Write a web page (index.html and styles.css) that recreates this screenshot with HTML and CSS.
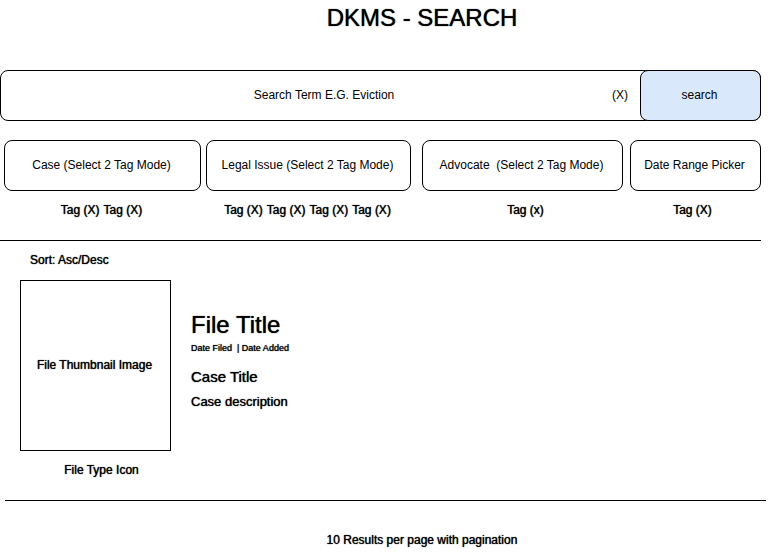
FILE: index.html
```html
<!DOCTYPE html>
<html lang="en">
<head>
  <meta charset="utf-8">
  <meta name="viewport" content="width=device-width, initial-scale=1">
  <title>DKMS - SEARCH</title>
  <link rel="stylesheet" href="styles.css">
</head>
<body>
  <header class="page-header">
    <h1 class="title strong">DKMS - SEARCH</h1>
  </header>
  <main>
    <form class="search-bar" role="search">
      <input class="search-input" type="text" aria-label="Search term" value="Search Term E.G. Eviction">
      <button class="clear" type="reset">(X)</button>
      <button class="submit" type="button">search</button>
    </form>

    <section class="filters" aria-label="Filters">
      <div class="filter">
        <select class="box" aria-label="Case"><option>Case (Select 2 Tag Mode)</option></select>
        <ul class="tags strong">
          <li>Tag <button type="button">(X)</button></li>
          <li>Tag <button type="button">(X)</button></li>
        </ul>
      </div>
      <div class="filter">
        <select class="box" aria-label="Legal issue"><option>Legal Issue (Select 2 Tag Mode)</option></select>
        <ul class="tags strong">
          <li>Tag <button type="button">(X)</button></li>
          <li>Tag <button type="button">(X)</button></li>
          <li>Tag <button type="button">(X)</button></li>
          <li>Tag <button type="button">(X)</button></li>
        </ul>
      </div>
      <div class="filter filter-advocate">
        <select class="box" aria-label="Advocate"><option>Advocate&nbsp; (Select 2 Tag Mode)</option></select>
        <ul class="tags strong">
          <li>Tag <button type="button">(x)</button></li>
        </ul>
      </div>
      <div class="filter filter-date">
        <button class="box" type="button">Date Range Picker</button>
        <ul class="tags strong">
          <li>Tag <button type="button">(X)</button></li>
        </ul>
      </div>
    </section>

    <section class="results strong" aria-label="Results">
      <button class="sort" type="button">Sort: Asc/Desc</button>
      <article class="result">
        <figure class="file">
          <div class="thumbnail">File Thumbnail Image</div>
          <figcaption class="file-type">File Type Icon</figcaption>
        </figure>
        <div class="details">
          <h2 class="file-title">File Title</h2>
          <p class="dates">Date Filed&nbsp; | Date Added</p>
          <h3 class="case-title">Case Title</h3>
          <p class="description">Case description</p>
        </div>
      </article>
    </section>
  </main>
  <footer class="pagination strong">10 Results per page with pagination</footer>
</body>
</html>
```
FILE: styles.css
```css
* {
  box-sizing: border-box;
}

body {
  margin: 0;
  background: #fff;
  color: #000;
  font: 12px/16px "Liberation Sans", Arial, Helvetica, sans-serif;
}

h1, h2, h3, p, ul, figure {
  margin: 0;
  padding: 0;
  font-weight: normal;
}

button, input, select {
  margin: 0;
  padding: 0;
  border: 0;
  background: none;
  color: inherit;
  font: inherit;
  text-shadow: inherit;
}

button, select {
  cursor: pointer;
}

/* Slightly heavier text than the regular weight */
.strong {
  text-shadow: 0 0 1px #000;
}

.page-header {
  padding: 4px 0 38px 76px;
  text-align: center;
}

.title {
  font-size: 24px;
  line-height: 28px;
}

main {
  margin-right: 7px;
}

.search-bar {
  display: flex;
  height: 51px;
  border: 1px solid #000;
  border-radius: 8px;
}

.search-input {
  flex: 1;
  min-width: 0;
  margin-left: 48px;
  text-align: center;
}

.clear {
  width: 40px;
}

.submit {
  width: 121px;
  margin: -1px;
  border: 1px solid #000;
  border-radius: 8px;
  background: #dae8fc;
}

.filters {
  display: grid;
  grid-template-columns: 197fr 205fr 207fr 133fr;
  gap: 5px;
  padding: 19px 0 22px 4px;
  border-bottom: 1px solid #000;
}

.filter-advocate {
  margin-left: 6px;
}

.filter-date {
  margin-left: 2px;
}

.box {
  appearance: none;
  display: block;
  width: 100%;
  height: 51px;
  border: 1px solid #000;
  border-radius: 8px;
  text-align: center;
  text-align-last: center;
}

.search-input,
.clear,
.submit,
.box,
.thumbnail {
  padding: 0 2px 2px 0;
}

.tags {
  display: flex;
  justify-content: center;
  gap: 4px;
  padding: 11px 2px 0 0;
  list-style: none;
}

.filter-advocate .tags {
  padding-left: 8px;
}

.filter-date .tags {
  padding-right: 6px;
}

.results {
  margin: 0 -5px 0 5px;
  padding: 11px 0 22px 15px;
  border-bottom: 1px solid #000;
}

.sort {
  display: block;
  margin-left: 10px;
}

.result {
  display: flex;
  gap: 20px;
  margin-top: 12px;
}

.thumbnail {
  display: flex;
  align-items: center;
  justify-content: center;
  width: 151px;
  height: 171px;
  border: 1px solid #000;
}

.file-type {
  padding: 11px 0 0 12px;
  text-align: center;
}

.details {
  padding-top: 31px;
}

.file-title {
  font-size: 24px;
  line-height: 28px;
}

.dates {
  margin-top: 3px;
  font-size: 9px;
  line-height: 12px;
}

.case-title {
  margin-top: 14px;
  font-size: 15px;
  line-height: 18px;
}

.description {
  margin-top: 8px;
  font-size: 13px;
}

.pagination {
  padding: 31px 0 4px 76px;
  text-align: center;
}
```
